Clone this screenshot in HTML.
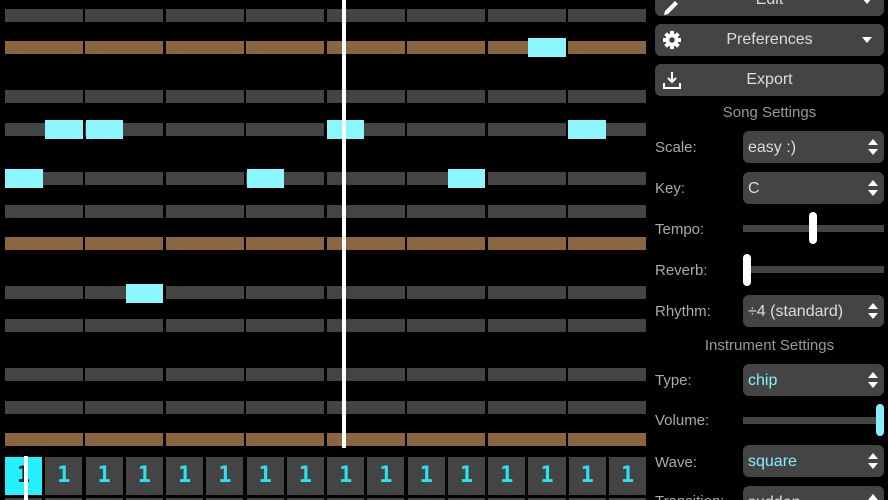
<!DOCTYPE html>
<html><head><meta charset="utf-8"><style>
*{margin:0;padding:0;box-sizing:border-box}
html{width:888px;height:500px;overflow:hidden}
body{width:888px;height:500px;background:#000;position:relative;overflow:hidden;font-family:"Liberation Sans",sans-serif;}
.row{position:absolute;left:5px;width:641px;height:13px;display:flex;gap:2.4px}
.row div{flex:1;background:#444}
.row.b div{background:#8a6540}
.n{position:absolute;height:19px;background:#8cf6ff;width:38px}
.pl{position:absolute;left:342px;top:0;width:4px;height:448px;background:#fff}
.pats{position:absolute;left:5px;width:641px;display:flex;gap:3.2px}
.pats div{flex:1;height:38px;background:#444;color:#2ee0f0;font-weight:bold;font-size:22px;text-align:center;line-height:38px;font-family:"DejaVu Sans Mono","Liberation Mono",monospace}
.btn{position:absolute;left:655px;width:229px;height:32px;background:#444;border-radius:6px;color:#ddd;font-size:16px;text-align:center;line-height:32px}
.btn .ar{position:absolute;right:12px;top:13px;width:0;height:0;border-left:5px solid transparent;border-right:5px solid transparent;border-top:6px solid #fff}
.hd{position:absolute;left:655px;width:229px;text-align:center;color:#999;font-size:15px}
.lb{position:absolute;left:655px;color:#aaa;font-size:15px}
.sel{position:absolute;left:743px;width:141px;height:32px;background:#444;border-radius:6px;color:#ddd;font-size:16px;line-height:33px;padding-left:5px}
.sel.c{color:#8ef}
.sel:after{content:"";position:absolute;right:6px;top:8px;border-left:5px solid transparent;border-right:5px solid transparent;border-bottom:6px solid #fff}
.sel:before{content:"";position:absolute;right:6px;top:18px;border-left:5px solid transparent;border-right:5px solid transparent;border-top:6px solid #fff}
.tr{position:absolute;left:743px;width:141px;height:7px;background:#444}
.th{position:absolute;width:8px;height:32px;background:#fff;border-radius:4px}
</style></head><body>
<div class="row" style="top:9px"><div></div><div></div><div></div><div></div><div></div><div></div><div></div><div></div></div>
<div class="row b" style="top:41px"><div></div><div></div><div></div><div></div><div></div><div></div><div></div><div></div></div>
<div class="row" style="top:90px"><div></div><div></div><div></div><div></div><div></div><div></div><div></div><div></div></div>
<div class="row" style="top:123px"><div></div><div></div><div></div><div></div><div></div><div></div><div></div><div></div></div>
<div class="row" style="top:172px"><div></div><div></div><div></div><div></div><div></div><div></div><div></div><div></div></div>
<div class="row" style="top:205px"><div></div><div></div><div></div><div></div><div></div><div></div><div></div><div></div></div>
<div class="row b" style="top:237px"><div></div><div></div><div></div><div></div><div></div><div></div><div></div><div></div></div>
<div class="row" style="top:286px"><div></div><div></div><div></div><div></div><div></div><div></div><div></div><div></div></div>
<div class="row" style="top:319px"><div></div><div></div><div></div><div></div><div></div><div></div><div></div><div></div></div>
<div class="row" style="top:368px"><div></div><div></div><div></div><div></div><div></div><div></div><div></div><div></div></div>
<div class="row" style="top:401px"><div></div><div></div><div></div><div></div><div></div><div></div><div></div><div></div></div>
<div class="row b" style="top:433px"><div></div><div></div><div></div><div></div><div></div><div></div><div></div><div></div></div>

<div class="n" style="left:528px;top:38px"></div>
<div class="n" style="left:45px;top:120px"></div>
<div class="n" style="left:86px;top:120px;width:37px"></div>
<div class="n" style="left:327px;top:120px;width:37px"></div>
<div class="n" style="left:568px;top:120px"></div>
<div class="n" style="left:5px;top:169px"></div>
<div class="n" style="left:247px;top:169px;width:37px"></div>
<div class="n" style="left:448px;top:169px;width:37px"></div>
<div class="n" style="left:126px;top:284px;width:37px"></div>
<div class="pl"></div>

<div class="pats" style="top:457px"><div style="background:#25f0ff;color:#222">1</div><div>1</div><div>1</div><div>1</div><div>1</div><div>1</div><div>1</div><div>1</div><div>1</div><div>1</div><div>1</div><div>1</div><div>1</div><div>1</div><div>1</div><div>1</div></div>
<div class="pats" style="top:498px;height:2px;overflow:hidden"><div></div><div></div><div></div><div></div><div></div><div></div><div></div><div></div><div></div><div></div><div></div><div></div><div></div><div></div><div></div><div></div></div>
<div style="position:absolute;left:24px;top:456px;width:4px;height:44px;background:#fff"></div>

<div class="btn" style="top:0;height:16px;border-radius:0 0 6px 6px;overflow:hidden;line-height:0">Edit<span class="ar" style="top:-2px"></span>
<svg style="position:absolute;left:6px;top:-2px" width="20" height="20" viewBox="0 0 20 20"><path d="M3 17 L4 13 L14 3 L17 6 L7 16 Z" fill="#fff"/></svg></div>
<div class="btn" style="top:24px">Preferences<span class="ar"></span>
<svg style="position:absolute;left:7px;top:6px" width="20" height="20" viewBox="0 0 20 20"><g fill="#fff"><circle cx="10" cy="10" r="6.5"/><rect x="8" y="1" width="4" height="18"/><rect x="1" y="8" width="18" height="4"/><rect x="8" y="1" width="4" height="18" transform="rotate(45 10 10)"/><rect x="8" y="1" width="4" height="18" transform="rotate(-45 10 10)"/></g><circle cx="10" cy="10" r="2.8" fill="#444"/></svg></div>
<div class="btn" style="top:64px">Export
<svg style="position:absolute;left:7px;top:6px" width="20" height="20" viewBox="0 0 20 20"><path d="M10 2 V12 M6 8 L10 12 L14 8 M2 13 V18 H18 V13" stroke="#fff" stroke-width="2" fill="none"/></svg></div>
<div class="hd" style="top:104px">Song Settings</div>
<div class="lb" style="top:139px">Scale:</div><div class="sel" style="top:131px">easy :)</div>
<div class="lb" style="top:180px">Key:</div><div class="sel" style="top:172px">C</div>
<div class="lb" style="top:221px">Tempo:</div><div class="tr" style="top:225px"></div><div class="th" style="left:809px;top:212px"></div>
<div class="lb" style="top:262px">Reverb:</div><div class="tr" style="top:266px"></div><div class="th" style="left:743px;top:254px"></div>
<div class="lb" style="top:303px">Rhythm:</div><div class="sel" style="top:295px">÷4 (standard)</div>
<div class="hd" style="top:337px">Instrument Settings</div>
<div class="lb" style="top:372px">Type:</div><div class="sel c" style="top:364px">chip</div>
<div class="lb" style="top:412px">Volume:</div><div class="tr" style="top:417px;width:133px"></div><div class="th" style="left:876px;top:404px;background:#8ef"></div>
<div class="lb" style="top:454px">Wave:</div><div class="sel c" style="top:445px">square</div>
<div class="lb" style="top:493px;height:7px;overflow:hidden">Transition:</div><div class="sel" style="top:486px;height:14px;overflow:hidden;border-radius:6px 6px 0 0">sudden</div>
</body></html>
